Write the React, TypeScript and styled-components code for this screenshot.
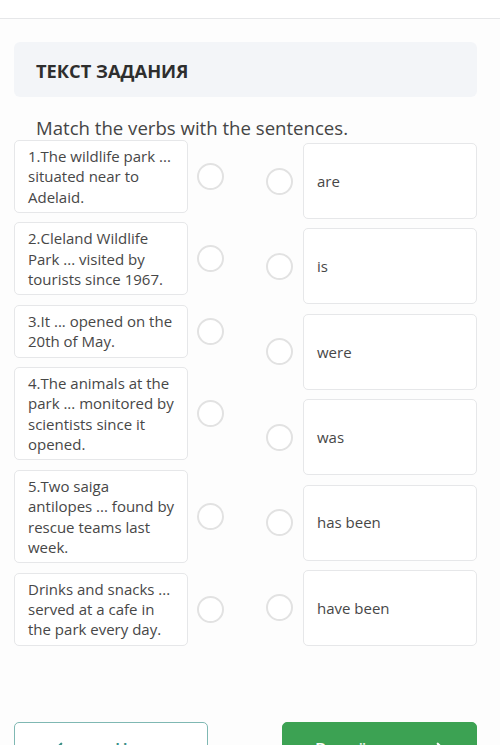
import React from "react";
import styled, { createGlobalStyle } from "styled-components";

const Global = createGlobalStyle`
  html, body { margin: 0; padding: 0; background: #fdfdfd; }
  body { font-family: "Open Sans", "Noto Sans", sans-serif; color: #444; }
`;

const Page = styled.div`
  width: 500px;
  min-height: 745px;
  background: #fdfdfd;
`;

const TopBar = styled.div`
  height: 18px;
  background: #ffffff;
  border-bottom: 1px solid #e6e7e9;
`;

const Content = styled.div`
  padding: 23px 23px 0 14px;
`;

const TaskHeader = styled.div`
  height: 55px;
  background: #f3f5f8;
  border-radius: 6px;
  display: flex;
  align-items: center;
  padding: 2px 0 0 22px;
  box-sizing: border-box;
  font-weight: 700;
  font-size: 18.3px;
  color: #2e2e2e;
`;

const Instruction = styled.div`
  margin: 20px 0 0 22px;
  font-size: 18.6px;
  line-height: 22px;
  color: #454545;
`;

const Board = styled.div`
  margin-top: 1px;
  display: flex;
  justify-content: space-between;
`;

const Column = styled.div<{ $gap: number; $top: number }>`
  display: flex;
  flex-direction: column;
  gap: ${(p) => p.$gap}px;
  padding-top: ${(p) => p.$top}px;
`;

const Row = styled.div<{ $h?: number }>`
  display: flex;
  align-items: center;
  ${(p) => (p.$h ? `height: ${p.$h}px;` : "")}
`;

const Card = styled.div<{ $centered?: boolean }>`
  box-sizing: border-box;
  width: 174px;
  background: #ffffff;
  border: 1px solid #e6e7e9;
  border-radius: 5px;
  padding: 5px 11.5px 5px 13px;
  font-size: 15px;
  line-height: 20.3px;
  color: #474747;
  ${(p) =>
    p.$centered
      ? `height: 100%; display: flex; align-items: center;`
      : ""}
`;

const Radio = styled.div<{ $side: "left" | "right" }>`
  box-sizing: border-box;
  width: 27px;
  height: 27px;
  border-radius: 50%;
  border: 2px solid #e2e2e2;
  background: #fff;
  flex-shrink: 0;
  ${(p) => (p.$side === "left" ? "margin-left: 9px;" : "margin-right: 10px;")}
`;

const Footer = styled.div`
  margin-top: 76px;
  display: flex;
  justify-content: space-between;
`;

const Button = styled.div<{ $primary?: boolean }>`
  box-sizing: border-box;
  width: ${(p) => (p.$primary ? 195 : 194)}px;
  height: 54px;
  border-radius: 5px;
  display: flex;
  align-items: center;
  font-size: 17px;
  font-weight: 600;
  ${(p) =>
    p.$primary
      ? `background: #3ca253; color: #fff; border: 1px solid #3ca253; padding: 0 30px 0 32px; justify-content: space-between;`
      : `background: #fff; color: #3a8f88; border: 1px solid #7fb8b3; padding: 0 0 0 38px; gap: 44px;`}
`;

const Arrow = ({ dir, color }: { dir: "left" | "right"; color: string }) => (
  <svg width="18" height="18" viewBox="0 0 24 24" fill="none" stroke={color} strokeWidth="3" strokeLinecap="round" strokeLinejoin="round">
    {dir === "left" ? (
      <>
        <path d="M20 12H5" />
        <path d="M11 5l-7 7 7 7" />
      </>
    ) : (
      <>
        <path d="M4 12h15" />
        <path d="M13 5l7 7-7 7" />
      </>
    )}
  </svg>
);

const sentences = [
  "1.The wildlife park ... situated near to Adelaid.",
  "2.Cleland Wildlife Park ... visited by tourists since 1967.",
  "3.It ... opened on the 20th of May.",
  "4.The animals at the park ... monitored by scientists since it opened.",
  "5.Two saiga antilopes ... found by rescue teams last week.",
  "Drinks and snacks ... served at a cafe in the park every day.",
];

const verbs = ["are", "is", "were", "was", "has been", "have been"];

export default function App() {
  return (
    <Page>
      <Global />
      <TopBar />
      <Content>
        <TaskHeader>ТЕКСТ ЗАДАНИЯ</TaskHeader>
        <Instruction>Match the verbs with the sentences.</Instruction>
        <Board>
          <Column $gap={9.6} $top={0}>
            {sentences.map((s) => (
              <Row key={s}>
                <Card>{s}</Card>
                <Radio $side="left" />
              </Row>
            ))}
          </Column>
          <Column $gap={9.4} $top={3}>
            {verbs.map((v) => (
              <Row key={v} $h={76}>
                <Radio $side="right" />
                <Card $centered>{v}</Card>
              </Row>
            ))}
          </Column>
        </Board>
        <Footer>
          <Button>
            <Arrow dir="left" color="#3a8f88" />
            <span>Назад</span>
          </Button>
          <Button $primary>
            <span>Вперёд</span>
            <Arrow dir="right" color="#fff" />
          </Button>
        </Footer>
      </Content>
    </Page>
  );
}
